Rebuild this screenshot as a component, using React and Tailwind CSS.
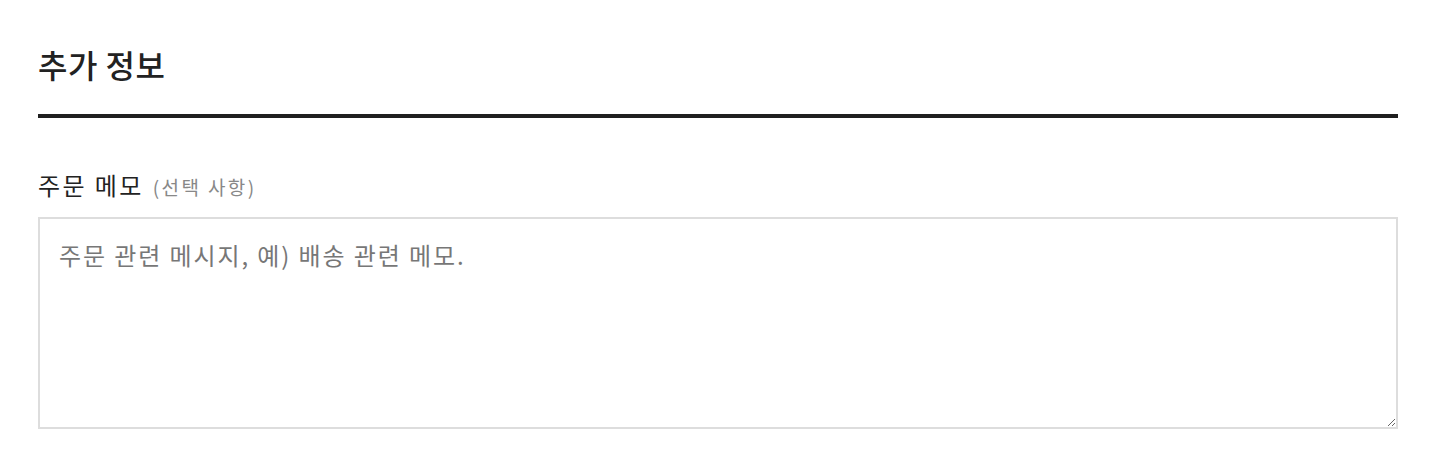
export default function App() {
  return (
    <div
      className="min-h-screen bg-white px-[38px] pt-[40px]"
      style={{ fontFamily: '"Noto Sans CJK KR", "Noto Sans", sans-serif' }}
    >
      <h2 className="text-[32px] leading-[48px] font-medium text-[#222] tracking-[0.5px]">추가 정보</h2>
      <div className="mt-[26px] h-[4px] bg-[#1f1f1f]" />

      <div className="mt-[52px]">
        <label className="flex items-baseline gap-[9px] text-[24px] leading-[30px] text-[#222] tracking-[2.4px]">
          주문 메모
          <span className="text-[19px] text-[#888] tracking-[2.4px]">(선택 사항)</span>
        </label>
        <textarea
          className="mt-[15px] block w-full h-[212px] border-2 border-[#dddddd] px-[19px] py-[19px] text-[24px] leading-[34px] tracking-[1.9px] text-[#333] placeholder:text-[#777] outline-none"
          placeholder="주문 관련 메시지, 예) 배송 관련 메모."
        />
      </div>
    </div>
  );
}
